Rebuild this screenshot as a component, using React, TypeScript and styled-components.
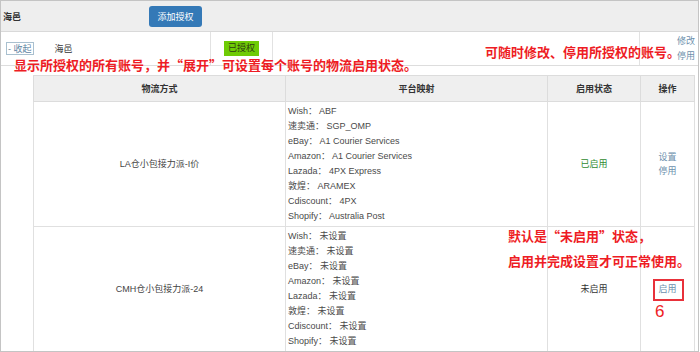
import styled, { createGlobalStyle } from "styled-components";

const GlobalStyle = createGlobalStyle`
  html, body {
    margin: 0;
    padding: 0;
    background: #fff;
  }
  * {
    box-sizing: border-box;
  }
`;

const Frame = styled.div`
  position: relative;
  width: 699px;
  height: 352px;
  border: 1px solid #c4c4c4;
  overflow: hidden;
  font-family: "Liberation Sans", "Noto Sans CJK SC", sans-serif;
  font-size: 9px;
  color: #444;
`;

const HeaderBar = styled.div`
  display: grid;
  grid-template-columns: 148px auto;
  align-items: center;
  height: 31px;
  background: #eeeeee;
  border-bottom: 1px solid #d9d9d9;
`;

const HeaderName = styled.span`
  padding-left: 2px;
  font-weight: bold;
  color: #333;
`;

const AddButton = styled.button`
  width: 53px;
  height: 21px;
  border: none;
  border-radius: 3px;
  background: #3479b7;
  color: #fff;
  font-family: inherit;
  font-size: 9px;
  padding: 0;
`;

const AccountRow = styled.div`
  display: grid;
  grid-template-columns: 210px 62px 367px 1fr;
  height: 34px;
  border-bottom: 1px solid #dddddd;
`;

const Cell = styled.div<{ $center?: boolean }>`
  display: flex;
  align-items: center;
  justify-content: ${(p) => (p.$center ? "center" : "flex-start")};
  border-right: 1px solid #e2e2e2;
  &:last-child {
    border-right: none;
  }
`;

const Toggle = styled.span`
  margin-left: 5px;
  padding: 0 1px;
  height: 13px;
  line-height: 12px;
  border: 1px solid #a9c0cf;
  color: #5f86a4;
  font-size: 9px;
`;

const AccountName = styled.span`
  margin-left: 21px;
  color: #333;
`;

const Badge = styled.span`
  display: inline-block;
  padding: 0 4px;
  height: 15px;
  line-height: 15px;
  background: #6fcb05;
  color: #2d3a12;
`;

const Actions = styled.div`
  display: flex;
  flex-direction: column;
  align-items: flex-end;
  justify-content: center;
  width: 100%;
  padding-right: 3px;
  line-height: 15px;
`;

const LinkText = styled.span`
  color: #6d90ad;
`;

const Details = styled.div`
  padding: 9px 4px 0 32px;
`;

const Table = styled.table`
  width: 661px;
  border-collapse: collapse;
  table-layout: fixed;
  border: 1px solid #dcdcdc;
`;

const Th = styled.th<{ $w: number }>`
  width: ${(p) => p.$w}px;
  height: 26px;
  background: #efefef;
  border: 1px solid #dcdcdc;
  font-weight: bold;
  color: #333;
  font-size: 9px;
`;

const Td = styled.td<{ $align?: string }>`
  border: 1px solid #e0e0e0;
  text-align: ${(p) => p.$align || "center"};
  vertical-align: middle;
  padding: 2px 2px;
  line-height: 15px;
`;

const MapLine = styled.div`
  white-space: nowrap;
  color: #4a4a4a;
`;

const StatusText = styled.span<{ $on?: boolean }>`
  color: ${(p) => (p.$on ? "#2f8a2f" : "#333")};
`;

const OpLinks = styled.div`
  display: flex;
  flex-direction: column;
  align-items: center;
  line-height: 14px;
`;

const Note = styled.div<{ $x: number; $y: number }>`
  position: absolute;
  left: ${(p) => p.$x}px;
  top: ${(p) => p.$y}px;
  color: #ee1c24;
  font-family: "Noto Sans CJK SC", sans-serif;
  font-weight: bold;
  font-size: 13px;
  line-height: 15px;
  white-space: nowrap;
`;

const HighlightBox = styled.div`
  position: absolute;
  left: 652px;
  top: 278px;
  width: 31px;
  height: 22px;
  border: 2px solid #e8313a;
`;

const StepNumber = styled.div`
  position: absolute;
  left: 654px;
  top: 302px;
  color: #ee1c24;
  font-family: "Liberation Sans", sans-serif;
  font-size: 17px;
  line-height: 17px;
`;

const platforms = ["Wish", "速卖通", "eBay", "Amazon", "Lazada", "敦煌", "Cdiscount", "Shopify"];

const rows = [
  {
    name: "LA仓小包接力派-I价",
    mapping: ["ABF", "SGP_OMP", "A1 Courier Services", "A1 Courier Services", "4PX Express", "ARAMEX", "4PX", "Australia Post"],
    enabled: true,
  },
  {
    name: "CMH仓小包接力派-24",
    mapping: platforms.map(() => "未设置"),
    enabled: false,
  },
];

export default function App() {
  return (
    <>
      <GlobalStyle />
      <Frame>
        <HeaderBar>
          <HeaderName>海邑</HeaderName>
          <div>
            <AddButton>添加授权</AddButton>
          </div>
        </HeaderBar>
        <AccountRow>
          <Cell>
            <Toggle>- 收起</Toggle>
            <AccountName>海邑</AccountName>
          </Cell>
          <Cell $center>
            <Badge>已授权</Badge>
          </Cell>
          <Cell />
          <Cell>
            <Actions>
              <LinkText>修改</LinkText>
              <LinkText>停用</LinkText>
            </Actions>
          </Cell>
        </AccountRow>
        <Details>
          <Table>
            <thead>
              <tr>
                <Th $w={252}>物流方式</Th>
                <Th $w={262}>平台映射</Th>
                <Th $w={93}>启用状态</Th>
                <Th $w={54}>操作</Th>
              </tr>
            </thead>
            <tbody>
              {rows.map((row) => (
                <tr key={row.name}>
                  <Td>{row.name}</Td>
                  <Td $align="left">
                    {platforms.map((p, i) => (
                      <MapLine key={p}>
                        {p}： {row.mapping[i]}
                      </MapLine>
                    ))}
                  </Td>
                  <Td>
                    <StatusText $on={row.enabled}>{row.enabled ? "已启用" : "未启用"}</StatusText>
                  </Td>
                  <Td>
                    <OpLinks>
                      {row.enabled ? (
                        <>
                          <LinkText>设置</LinkText>
                          <LinkText>停用</LinkText>
                        </>
                      ) : (
                        <LinkText>启用</LinkText>
                      )}
                    </OpLinks>
                  </Td>
                </tr>
              ))}
            </tbody>
          </Table>
        </Details>
        <Note $x={13} $y={56}>显示所授权的所有账号，并“展开”可设置每个账号的物流启用状态。</Note>
        <Note $x={484} $y={43}>可随时修改、停用所授权的账号。</Note>
        <Note $x={507} $y={227}>默认是“未启用”状态，</Note>
        <Note $x={507} $y={252}>启用并完成设置才可正常使用。</Note>
        <HighlightBox />
        <StepNumber>6</StepNumber>
      </Frame>
    </>
  );
}
